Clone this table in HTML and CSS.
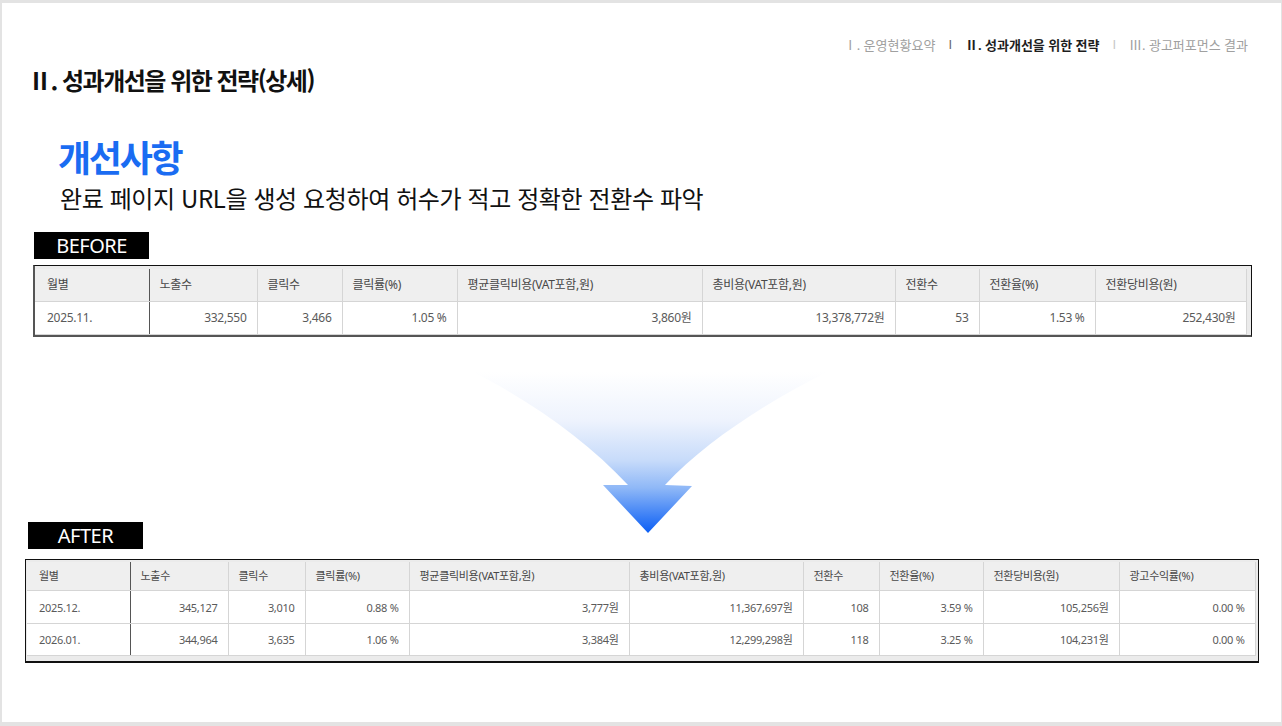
FILE: index.html
```html
<!DOCTYPE html>
<html lang="ko">
<head>
<meta charset="utf-8">
<title>성과개선을 위한 전략(상세)</title>
<link rel="stylesheet" href="styles.css">
</head>
<body>
<div class="page">
  <nav class="topnav">
    <span class="nav-item">Ⅰ. 운영현황요약</span><span class="sep sep-dark">I</span>
    <span class="nav-item active">Ⅱ. 성과개선을 위한 전략</span><span class="sep">I</span>
    <span class="nav-item">Ⅲ. 광고퍼포먼스 결과</span>
  </nav>
  <h1 class="title">Ⅱ. 성과개선을 위한 전략(상세)</h1>

  <h2 class="heading">개선사항</h2>
  <p class="subtitle">완료 페이지 URL을 생성 요청하여 허수가 적고 정확한 전환수 파악</p>

  <div class="label label-before">BEFORE</div>
  <div class="tbl-wrap before">
    <table class="tbl">
      <colgroup>
        <col style="width:114px"><col style="width:108px"><col style="width:85px"><col style="width:115px"><col style="width:245px"><col style="width:193px"><col style="width:84px"><col style="width:116px"><col style="width:151px">
      </colgroup>
      <thead>
        <tr><th class="c1">월별</th><th>노출수</th><th>클릭수</th><th>클릭률(%)</th><th>평균클릭비용(VAT포함,원)</th><th>총비용(VAT포함,원)</th><th>전환수</th><th>전환율(%)</th><th>전환당비용(원)</th></tr>
      </thead>
      <tbody>
        <tr><td class="c1">2025.11.</td><td>332,550</td><td>3,466</td><td>1.05 %</td><td>3,860원</td><td>13,378,772원</td><td>53</td><td>1.53 %</td><td>252,430원</td></tr>
      </tbody>
    </table>
  </div>

  <svg class="arrow" width="354" height="162" viewBox="0 0 354 162" aria-hidden="true">
    <defs>
      <linearGradient id="ag" x1="0" y1="0" x2="0" y2="1">
        <stop offset="0" stop-color="#ffffff"/>
        <stop offset="0.3" stop-color="#eef3fd"/>
        <stop offset="0.55" stop-color="#c7dbfa"/>
        <stop offset="0.72" stop-color="#8fb8f7"/>
        <stop offset="1" stop-color="#0a5ef5"/>
      </linearGradient>
    </defs>
    <path d="M0,0 L354,0 C294,30 232,70 192,113 L219,114 L175,161 L130,113 L155,113 C115,70 60,30 0,0 Z" fill="url(#ag)"/>
  </svg>

  <div class="label label-after">AFTER</div>
  <div class="tbl-wrap after">
    <table class="tbl tbl-small">
      <colgroup>
        <col style="width:103px"><col style="width:98px"><col style="width:77px"><col style="width:104px"><col style="width:220px"><col style="width:174px"><col style="width:76px"><col style="width:104px"><col style="width:136px"><col style="width:136px">
      </colgroup>
      <thead>
        <tr><th class="c1">월별</th><th>노출수</th><th>클릭수</th><th>클릭률(%)</th><th>평균클릭비용(VAT포함,원)</th><th>총비용(VAT포함,원)</th><th>전환수</th><th>전환율(%)</th><th>전환당비용(원)</th><th>광고수익률(%)</th></tr>
      </thead>
      <tbody>
        <tr><td class="c1">2025.12.</td><td>345,127</td><td>3,010</td><td>0.88 %</td><td>3,777원</td><td>11,367,697원</td><td>108</td><td>3.59 %</td><td>105,256원</td><td>0.00 %</td></tr>
        <tr><td class="c1">2026.01.</td><td>344,964</td><td>3,635</td><td>1.06 %</td><td>3,384원</td><td>12,299,298원</td><td>118</td><td>3.25 %</td><td>104,231원</td><td>0.00 %</td></tr>
      </tbody>
    </table>
  </div>
</div>
</body>
</html>
```

FILE: styles.css
```css
* { box-sizing: border-box; }
html, body { margin: 0; padding: 0; }
body {
  background: #e3e3e3;
  font-family: "Noto Sans", "Noto Sans CJK KR", sans-serif;
  overflow: hidden;
}
.page {
  margin: 3px 1px 4px 2px;
  height: 719px;
  background: #ffffff;
  display: flex;
  flex-direction: column;
  align-items: flex-start;
}
.topnav {
  align-self: flex-end;
  margin: 34px 33px 0 0;
  font-size: 13px;
  line-height: 16px;
  letter-spacing: 0;
  color: #a0a0a0;
  display: flex;
  gap: 13px;
  white-space: nowrap;
}
.nav-item.active { color: #1e1e1e; font-weight: 700; }
.sep { color: #c8c8c8; font-family: "Liberation Sans", sans-serif; }
.sep-dark { color: #6a6a6a; }
.title {
  margin: 12px 0 0 26px;
  font-family: "Noto Sans CJK KR", sans-serif;
  font-size: 24px;
  line-height: 30px;
  font-weight: 700;
  letter-spacing: -1.5px;
  color: #111;
}
.heading {
  margin: 40px 0 0 56px;
  font-family: "Noto Sans CJK KR", sans-serif;
  font-size: 36px;
  line-height: 42px;
  font-weight: 700;
  letter-spacing: -2.3px;
  color: #1a6cf2;
}
.subtitle {
  margin: 6px 0 0 58px;
  font-family: "Noto Sans CJK KR", sans-serif;
  font-size: 24px;
  line-height: 30px;
  letter-spacing: -0.4px;
  color: #111;
}
.label {
  background: #000;
  color: #fff;
  font-family: "Noto Sans", sans-serif;
  font-size: 20px;
  line-height: 27px;
  height: 27px;
  letter-spacing: -0.5px;
  text-align: center;
}
.label-before { margin: 19px 0 0 32px; width: 115px; }
.label-after { margin: 0 0 0 26px; width: 115px; }
.tbl-wrap { background: #ebebeb; }
.before {
  margin: 6px 0 0 31px;
  border-top: 1px solid #111;
  border-left: 2px solid #555;
  border-right: 1px solid #111;
  border-bottom: 2px solid #555;
  padding: 3px 4px 0 0;
}
.after {
  margin: 10px 0 0 23px;
  border: 1px solid #111;
  border-bottom-width: 2px;
  padding: 2px 2px 5px 1px;
}
.tbl {
  border-collapse: collapse;
  table-layout: fixed;
  font-size: 12px;
  line-height: 14px;
  letter-spacing: -0.3px;
  white-space: nowrap;
}
.tbl th, .tbl td {
  border-right: 1px solid #d5d5d5;
  border-bottom: 1px solid #d5d5d5;
  padding: 0 10px;
  height: 33px;
  overflow: hidden;
}
.tbl th {
  background: #efefef;
  text-align: left;
  font-weight: 400;
  color: #484848;
  height: 32px;
}
.tbl td {
  background: #fff;
  text-align: right;
  color: #5a5a5a;
}
.tbl td.c1 { text-align: left; padding-left: 12px; }
.tbl th.c1 { padding-left: 12px; }
.tbl .c1 { border-right: 1px solid #555; }
.tbl-small { font-size: 11px; line-height: 13px; }
.tbl-small th { height: 29px; }
.tbl-small td { height: 33px; }
.tbl-small tr:last-child td { height: 32px; }
.arrow {
  display: block;
  margin: 35px 0 -12px 471px;
  overflow: visible;
}
```
